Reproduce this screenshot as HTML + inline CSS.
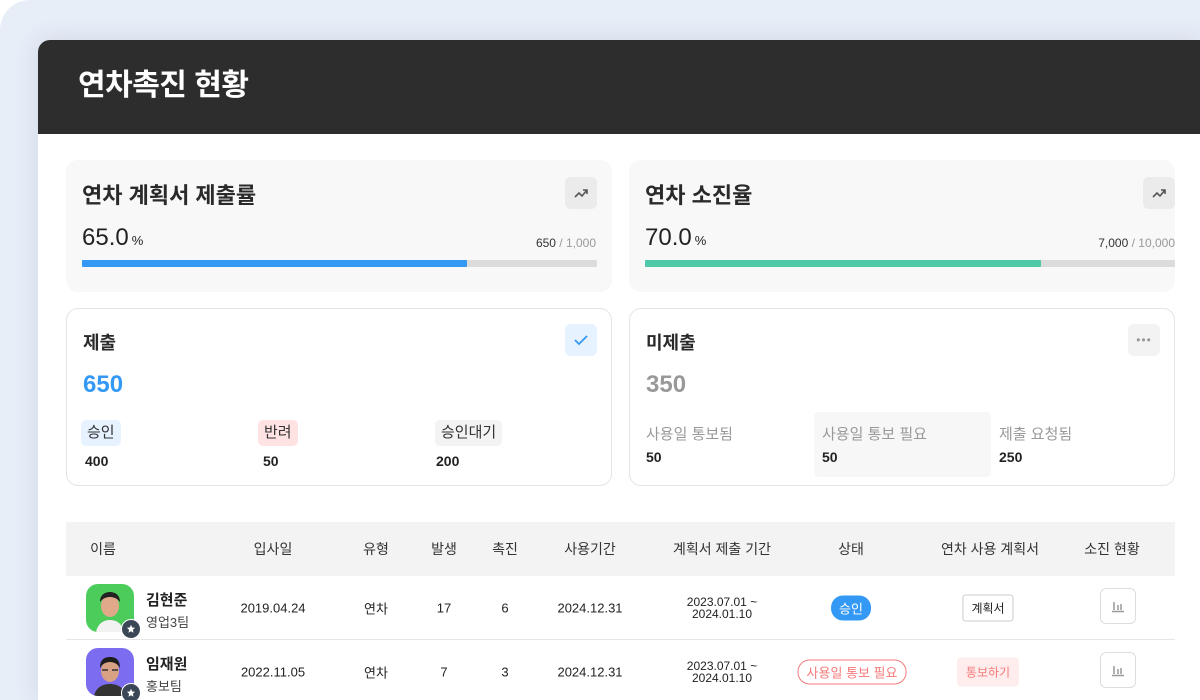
<!DOCTYPE html>
<html><head><meta charset="utf-8"><style>
*{margin:0;padding:0;box-sizing:border-box}
html,body{width:1200px;height:700px;overflow:hidden}
body{background:#fff;font-family:"Liberation Sans","Noto Sans CJK KR",sans-serif;color:#222;position:relative}
.bgr{position:absolute;left:0;top:0;width:1200px;height:700px;background:#e8eef8;border-radius:30px 0 0 0}
.panel{position:absolute;left:38px;top:40px;width:1162px;height:660px;background:#fff;border-radius:12px 0 0 0;overflow:hidden;box-shadow:0 0 24px rgba(60,70,110,.15)}
.hdr{height:94px;background:#2d2d2d;color:#fff;font-size:30px;font-weight:700;padding-left:40px;line-height:92px;letter-spacing:-0.5px}
.abs{position:absolute}
.card{position:absolute;border-radius:12px}
.gray{background:#f8f8f8}
.wc{background:#fff;border:1px solid #e4e4e4}
.ttl{position:absolute;left:16px;font-weight:700;color:#2a2a2a}
.ib{position:absolute;width:32px;height:32px;border-radius:6px;background:#ebebeb;display:flex;align-items:center;justify-content:center}
.bar{position:absolute;left:16px;height:7px;background:#dcdcdc;border-radius:1px}
.bar i{display:block;height:100%;border-radius:1px}
.pct{position:absolute;left:16px;top:64px;font-size:24px;color:#222}
.pct small{font-size:13px;margin-left:3px}
.frac{position:absolute;right:16px;top:76px;font-size:12px;color:#333}
.frac span{color:#999}
.badge{position:absolute;top:111px;height:26px;padding:0 6px;border-radius:5px;font-size:15px;line-height:26px;color:#333}
.num{position:absolute;top:144px;font-size:14px;font-weight:700;color:#222}
.lbl{position:absolute;font-size:15px;color:#999}
.th{position:absolute;left:28px;top:482px;width:1109px;height:54px;background:#f3f3f3}
.th span{position:absolute;top:0;line-height:54px;font-size:14px;color:#333;transform:translateX(-50%)}
.row{position:absolute;left:28px;width:1109px;height:64px;border-bottom:1px solid #e6e6e6}
.c{position:absolute;transform:translate(-50%,-50%);top:32px;font-size:13px;color:#222;white-space:nowrap;text-align:center}
.av{position:absolute;left:20px;top:8px;width:48px;height:48px;border-radius:12px;overflow:hidden}
.star{position:absolute;left:55px;top:43px;width:20px;height:20px;border-radius:50%;background:#3b4656;border:1.5px solid #fff;display:flex;align-items:center;justify-content:center}
.nm{position:absolute;left:80px;top:13px;font-size:15px;font-weight:700}
.tm{position:absolute;left:80px;top:36px;font-size:13px;color:#444}
.chart{position:absolute;left:1034px;top:12px;width:36px;height:36px;border:1px solid #ddd;border-radius:6px;display:flex;align-items:center;justify-content:center}
</style></head><body>
<div class="bgr"></div>
<div class="panel">
<div class="hdr">연차촉진 현황</div>

<div class="card gray" style="left:28px;top:120px;width:546px;height:132px">
 <div class="ttl" style="top:18px;font-size:22px">연차 계획서 제출률</div>
 <div class="ib" style="left:499px;top:17px"><svg width="16" height="16" viewBox="0 0 16 16"><path d="M2 12l4-4 3 3 5-6M10 5h4v4" fill="none" stroke="#555" stroke-width="1.6"/></svg></div>
 <div class="pct">65.0<small>%</small></div>
 <div class="frac">650 <span>/ 1,000</span></div>
 <div class="bar" style="top:100px;width:515px"><i style="width:385px;background:#3399f5"></i></div>
</div>
<div class="card gray" style="left:591px;top:120px;width:546px;height:132px">
 <div class="ttl" style="top:18px;font-size:22px">연차 소진율</div>
 <div class="ib" style="left:514px;top:17px"><svg width="16" height="16" viewBox="0 0 16 16"><path d="M2 12l4-4 3 3 5-6M10 5h4v4" fill="none" stroke="#555" stroke-width="1.6"/></svg></div>
 <div class="pct">70.0<small>%</small></div>
 <div class="frac" style="right:0">7,000 <span>/ 10,000</span></div>
 <div class="bar" style="top:100px;width:530px"><i style="width:396px;background:#4ec9a8"></i></div>
</div>

<div class="card wc" style="left:28px;top:268px;width:546px;height:178px">
 <div class="ttl" style="top:20px;font-size:18px">제출</div>
 <div class="ib" style="left:498px;top:15px;background:#e6f2ff"><svg width="18" height="18" viewBox="0 0 18 18"><path d="M3 9l4 4 8-8" fill="none" stroke="#3399f5" stroke-width="1.8"/></svg></div>
 <div class="abs" style="left:16px;top:62px;font-size:24px;font-weight:700;color:#3399f5">650</div>
 <div class="badge" style="left:14px;background:#e6f2ff">승인</div>
 <div class="badge" style="left:191px;background:#ffe3e3">반려</div>
 <div class="badge" style="left:368px;background:#f3f3f3">승인대기</div>
 <div class="num" style="left:18px">400</div>
 <div class="num" style="left:196px">50</div>
 <div class="num" style="left:369px">200</div>
</div>
<div class="card wc" style="left:591px;top:268px;width:546px;height:178px">
 <div class="ttl" style="top:20px;font-size:18px">미제출</div>
 <div class="ib" style="left:498px;top:15px;background:#f3f3f3;color:#999;font-size:12px;letter-spacing:1px">•••</div>
 <div class="abs" style="left:16px;top:62px;font-size:24px;font-weight:700;color:#999">350</div>
 <div class="abs" style="left:184px;top:103px;width:177px;height:65px;background:#f7f7f7;border-radius:4px"></div>
 <div class="lbl" style="left:16px;top:114px">사용일 통보됨</div>
 <div class="lbl" style="left:192px;top:114px">사용일 통보 필요</div>
 <div class="lbl" style="left:369px;top:114px">제출 요청됨</div>
 <div class="num" style="left:16px;top:140px">50</div>
 <div class="num" style="left:192px;top:140px">50</div>
 <div class="num" style="left:369px;top:140px">250</div>
</div>

<div class="th">
 <span style="left:37px">이름</span><span style="left:207px">입사일</span><span style="left:310px">유형</span><span style="left:378px">발생</span><span style="left:439px">촉진</span><span style="left:524px">사용기간</span><span style="left:656px">계획서 제출 기간</span><span style="left:785px">상태</span><span style="left:924px">연차 사용 계획서</span><span style="left:1046px">소진 현황</span>
</div>

<div class="row" style="top:536px">
 <div class="av" style="background:#4ccc5a"><svg width="48" height="48" viewBox="0 0 48 48"><path d="M10 48c2-9 8-12 14-12s12 3 14 12z" fill="#f2f2f2"/><ellipse cx="24" cy="22" rx="9" ry="11" fill="#e0a98a"/><path d="M14 18c0-8 6-10 10-10s10 2 10 10c-3-4-7-5-10-5s-7 1-10 5z" fill="#222"/></svg></div>
 <div class="star"><svg width="10" height="10" viewBox="0 0 10 10"><path d="M5 .8l1.2 2.7 2.9.3-2.2 2 .6 2.9L5 7.2 2.5 8.7l.6-2.9-2.2-2 2.9-.3z" fill="#fff"/></svg></div>
 <div class="nm">김현준</div><div class="tm">영업3팀</div>
 <div class="c" style="left:207px">2019.04.24</div>
 <div class="c" style="left:310px">연차</div>
 <div class="c" style="left:378px">17</div>
 <div class="c" style="left:439px">6</div>
 <div class="c" style="left:524px">2024.12.31</div>
 <div class="c" style="left:656px;font-size:12px;line-height:12px">2023.07.01 ~<br>2024.01.10</div>
 <div class="c" style="left:785px;background:#3399f5;color:#fff;border-radius:12px;padding:3px 8px">승인</div>
 <div class="c" style="left:922px;border:1px solid #ccc;border-radius:3px;padding:4px 8px;font-size:12px">계획서</div>
 <div class="chart"><svg width="14" height="14" viewBox="0 0 14 14"><path d="M3 3v8M7 6v5M10 5v6M1 12.5h12" stroke="#999" stroke-width="1.5"/></svg></div>
</div>
<div class="row" style="top:600px">
 <div class="av" style="background:#7b6cf0"><svg width="48" height="48" viewBox="0 0 48 48"><path d="M8 48c2-9 9-12 16-12s14 3 16 12z" fill="#333"/><ellipse cx="24" cy="23" rx="9" ry="11" fill="#d9a184"/><path d="M14 20c0-9 5-11 10-11s10 2 10 11c-2-4-6-6-10-6s-8 2-10 6z" fill="#1d1d1d"/><path d="M16 22h6M26 22h6" stroke="#333" stroke-width="1.5"/></svg></div>
 <div class="star"><svg width="10" height="10" viewBox="0 0 10 10"><path d="M5 .8l1.2 2.7 2.9.3-2.2 2 .6 2.9L5 7.2 2.5 8.7l.6-2.9-2.2-2 2.9-.3z" fill="#fff"/></svg></div>
 <div class="nm">임재원</div><div class="tm">홍보팀</div>
 <div class="c" style="left:207px">2022.11.05</div>
 <div class="c" style="left:310px">연차</div>
 <div class="c" style="left:378px">7</div>
 <div class="c" style="left:439px">3</div>
 <div class="c" style="left:524px">2024.12.31</div>
 <div class="c" style="left:656px;font-size:12px;line-height:12px">2023.07.01 ~<br>2024.01.10</div>
 <div class="c" style="left:786px;border:1.5px solid #f57a7a;color:#f57a7a;border-radius:12px;padding:2px 8px">사용일 통보 필요</div>
 <div class="c" style="left:922px;background:#ffecec;color:#f57a7a;border-radius:4px;padding:6px 9px;font-size:12px">통보하기</div>
 <div class="chart"><svg width="14" height="14" viewBox="0 0 14 14"><path d="M3 3v8M7 6v5M10 5v6M1 12.5h12" stroke="#999" stroke-width="1.5"/></svg></div>
</div>
</div>
</body></html>
